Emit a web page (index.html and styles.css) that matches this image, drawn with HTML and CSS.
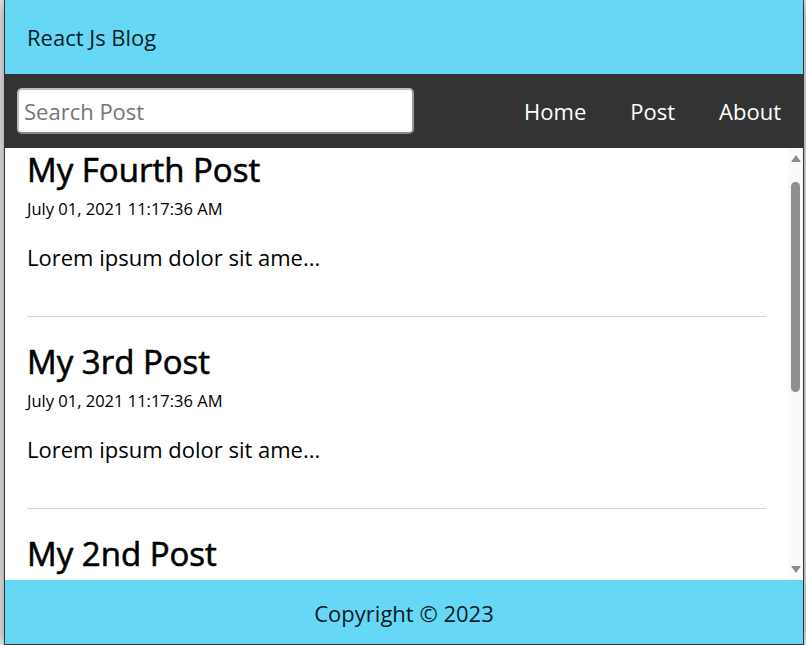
FILE: index.html
```html
<!DOCTYPE html>
<html lang="en">
<head>
<meta charset="utf-8">
<title>React Js Blog</title>
<link rel="stylesheet" href="styles.css">
</head>
<body>
<div class="app">
  <header class="header">
    <h1 class="header-title">React Js Blog</h1>
  </header>
  <nav class="nav">
    <form class="search-form">
      <input class="search-input" type="text" placeholder="Search Post">
    </form>
    <ul class="nav-list">
      <li class="nav-item"><a class="nav-link" href="#">Home</a></li>
      <li class="nav-item"><a class="nav-link" href="#">Post</a></li>
      <li class="nav-item"><a class="nav-link" href="#">About</a></li>
    </ul>
  </nav>
  <div class="content-area">
    <main class="home" id="home">
      <article class="post">
        <h2 class="post-title">My Fourth Post</h2>
        <p class="post-date">July 01, 2021 11:17:36 AM</p>
        <p class="post-body">Lorem ipsum dolor sit ame...</p>
      </article>
      <article class="post">
        <h2 class="post-title">My 3rd Post</h2>
        <p class="post-date">July 01, 2021 11:17:36 AM</p>
        <p class="post-body">Lorem ipsum dolor sit ame...</p>
      </article>
      <article class="post">
        <h2 class="post-title">My 2nd Post</h2>
        <p class="post-date">July 01, 2021 11:17:36 AM</p>
        <p class="post-body">Lorem ipsum dolor sit ame...</p>
      </article>
      <article class="post">
        <h2 class="post-title">My First Post</h2>
        <p class="post-date">July 01, 2021 11:17:36 AM</p>
        <p class="post-body">Lorem ipsum dolor sit ame...</p>
      </article>
    </main>
    <div class="scrollbar" aria-hidden="true">
      <div class="scroll-btn scroll-btn-up"><span class="arrow-up"></span></div>
      <div class="scroll-track"><div class="scroll-thumb"></div></div>
      <div class="scroll-btn scroll-btn-down"><span class="arrow-down"></span></div>
    </div>
  </div>
  <footer class="footer">
    <p class="footer-text">Copyright &copy; 2023</p>
  </footer>
</div>
<script src="script.js"></script>
</body>
</html>
```

FILE: styles.css
```css
* {
  margin: 0;
  padding: 0;
  box-sizing: border-box;
}

html {
  font-size: 22px;
}

body {
  height: 100vh;
  display: flex;
  padding: 0 2px 0 4px;
  background-color: #efefef;
  font-family: "Open Sans", "DejaVu Sans", sans-serif;
  color: #000;
}

.app {
  width: 100%;
  max-width: 800px;
  height: 100vh;
  margin: 0 auto;
  display: flex;
  flex-direction: column;
  border: 1px solid #333;
  border-top: none;
  box-shadow: 0 0 15px gray;
  overflow: hidden;
}

.header {
  flex: none;
  background-color: #66d8f5;
  padding: 22px 22px;
  display: flex;
  align-items: center;
}

.header-title {
  font-size: 22px;
  font-weight: 400;
  line-height: 30px;
  color: #0a1a22;
}

.nav {
  flex: none;
  height: 74px;
  background-color: #333;
  display: flex;
  align-items: center;
  justify-content: space-between;
}

.search-form {
  padding-left: 12px;
}

.search-input {
  display: block;
  width: 397px;
  height: 46px;
  font-family: "Open Sans", "DejaVu Sans", sans-serif;
  font-size: 22px;
  padding: 0 5px;
  border: 2px solid #bdbdbd;
  border-bottom-color: #8a8a8a;
  border-right-color: #9a9a9a;
  border-radius: 5px;
  outline: none;
  background: #fff;
}

.search-input::placeholder {
  color: #757575;
}

.nav-list {
  list-style: none;
  display: flex;
  justify-content: flex-end;
  align-items: center;
}

.nav-item {
  padding: 0 22px;
  line-height: 30px;
}

.nav-link {
  color: #fff;
  text-decoration: none;
  font-size: 22px;
}

.content-area {
  flex: 1 1 auto;
  min-height: 0;
  display: flex;
  background-color: #fff;
}

.home {
  flex: 1 1 auto;
  min-width: 0;
  overflow-y: auto;
  scrollbar-width: none;
  background-color: #fff;
  padding: 22px;
}

.home::-webkit-scrollbar {
  display: none;
}

.scrollbar {
  flex: none;
  width: 15px;
  display: flex;
  flex-direction: column;
  background-color: #fafafa;
}

.scroll-btn {
  flex: none;
  height: 20px;
  display: flex;
  justify-content: center;
  padding-left: 1px;
}

.scroll-btn-up {
  align-items: flex-end;
  padding-bottom: 6px;
}

.scroll-btn-down {
  align-items: flex-start;
  padding-top: 6px;
}

.arrow-up {
  width: 0;
  height: 0;
  border-left: 5px solid transparent;
  border-right: 5px solid transparent;
  border-bottom: 7px solid #8a8a8a;
}

.arrow-down {
  width: 0;
  height: 0;
  border-left: 5px solid transparent;
  border-right: 5px solid transparent;
  border-top: 7px solid #8a8a8a;
}

.scroll-track {
  flex: 1 1 auto;
  padding: 14px 3px 0 3px;
}

.scroll-thumb {
  width: 9px;
  height: 210px;
  border-radius: 5px;
  background-color: #8f8f8f;
}

.post {
  margin-top: 22px;
  margin-bottom: 22px;
  padding-bottom: 22px;
  border-bottom: 1px solid lightgray;
}

.post:first-child {
  margin-top: 0;
}

.post:last-child {
  border-bottom: none;
}

.post-title {
  font-size: 33px;
  font-weight: 400;
  line-height: 45px;
  -webkit-text-stroke: 0.6px #000;
}

.post-date {
  font-size: 16.5px;
  line-height: 22.5px;
  margin-top: 5.5px;
}

.post-body {
  font-size: 22px;
  line-height: 30px;
  margin: 22px 0;
}

.footer {
  flex: none;
  height: 64px;
  padding-top: 2px;
  background-color: #66d8f5;
  display: flex;
  align-items: center;
  justify-content: center;
}

.footer-text {
  font-size: 22px;
  line-height: 30px;
  color: #0a1a22;
}
```

FILE: script.js
```js
document.getElementById('home').scrollTop = 23;
```
